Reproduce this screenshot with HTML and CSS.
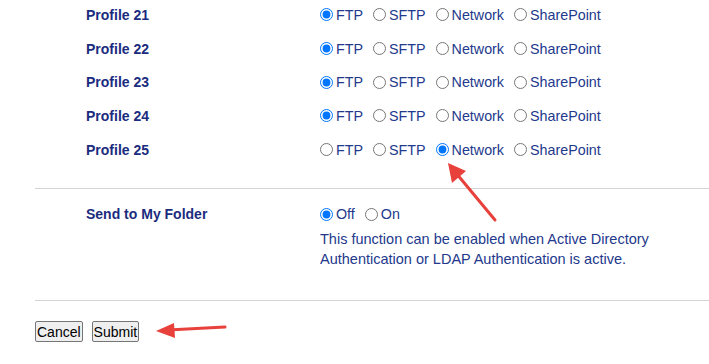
FILE: index.html
```html
<!DOCTYPE html>
<html lang="en">
<head>
    <meta charset="UTF-8">
    <title>Scan to Network Profiles</title>
    <link rel="stylesheet" href="styles.css">
</head>
<body>

    <div class="page">
        <!-- Profile protocol rows -->
        <div class="profiles">
            <div class="row">
                <div class="label">Profile 21</div>
                <div class="options">
                    <label class="opt"><input type="radio" name="p21" checked>FTP</label>
                    <label class="opt"><input type="radio" name="p21">SFTP</label>
                    <label class="opt"><input type="radio" name="p21">Network</label>
                    <label class="opt"><input type="radio" name="p21">SharePoint</label>
                </div>
            </div>
            <div class="row">
                <div class="label">Profile 22</div>
                <div class="options">
                    <label class="opt"><input type="radio" name="p22" checked>FTP</label>
                    <label class="opt"><input type="radio" name="p22">SFTP</label>
                    <label class="opt"><input type="radio" name="p22">Network</label>
                    <label class="opt"><input type="radio" name="p22">SharePoint</label>
                </div>
            </div>
            <div class="row">
                <div class="label">Profile 23</div>
                <div class="options">
                    <label class="opt"><input type="radio" name="p23" checked>FTP</label>
                    <label class="opt"><input type="radio" name="p23">SFTP</label>
                    <label class="opt"><input type="radio" name="p23">Network</label>
                    <label class="opt"><input type="radio" name="p23">SharePoint</label>
                </div>
            </div>
            <div class="row">
                <div class="label">Profile 24</div>
                <div class="options">
                    <label class="opt"><input type="radio" name="p24" checked>FTP</label>
                    <label class="opt"><input type="radio" name="p24">SFTP</label>
                    <label class="opt"><input type="radio" name="p24">Network</label>
                    <label class="opt"><input type="radio" name="p24">SharePoint</label>
                </div>
            </div>
            <div class="row">
                <div class="label">Profile 25</div>
                <div class="options">
                    <label class="opt"><input type="radio" name="p25">FTP</label>
                    <label class="opt"><input type="radio" name="p25">SFTP</label>
                    <label class="opt"><input type="radio" name="p25" checked>Network</label>
                    <label class="opt"><input type="radio" name="p25">SharePoint</label>
                </div>
            </div>
        </div>

        <hr class="divider">

        <!-- My folder setting -->
        <div class="folder">
            <div class="label">Send to My Folder</div>
            <div class="value">
                <div class="options">
                    <label class="opt"><input type="radio" name="myfolder" checked>Off</label>
                    <label class="opt"><input type="radio" name="myfolder">On</label>
                </div>
                <p class="note">This function can be enabled when Active Directory<br>Authentication or LDAP Authentication is active.</p>
            </div>
        </div>

        <hr class="divider">

        <div class="actions">
            <button>Cancel</button>
            <button>Submit</button>
        </div>
    </div>

    <!-- annotation arrows drawn over the page -->
    <svg class="marks" width="709" height="364" viewBox="0 0 709 364">
        <line x1="495" y1="220" x2="456" y2="173" stroke="#e8403a" stroke-width="3" stroke-linecap="round"/>
        <polygon points="448,163 452,183 466,171" fill="#e8403a"/>
        <line x1="225" y1="327" x2="168" y2="330" stroke="#e8403a" stroke-width="3" stroke-linecap="round"/>
        <polygon points="156,331 174,323 175,338" fill="#e8403a"/>
    </svg>

</body>
</html>
```

FILE: styles.css
```css
body {
    margin: 0;
    font-family: "Liberation Sans", Arial, sans-serif;
    font-size: 14.5px;
    color: #23398c;
    background: #ffffff;
    overflow: hidden;
}
.page {
    padding-left: 35px;
    margin-top: -2px;
}
.row {
    display: flex;
    align-items: center;
    height: 33.7px;
}
.label {
    box-sizing: border-box;
    width: 285px;
    padding-left: 51px;
    font-size: 14px;
    font-weight: bold;
    color: #1b2c7e;
}
.options {
    display: flex;
    align-items: center;
    gap: 10px;
    height: 20px;
    font-size: 14.3px;
}
.opt {
    display: flex;
    align-items: center;
}
.opt input {
    width: 13px;
    height: 13px;
    margin: 0 3px 0 0;
}
.divider {
    border: none;
    border-top: 1px solid #d4d4d4;
    margin: 22px 0 0 0;
}
.folder {
    display: flex;
    align-items: flex-start;
    padding: 15px 0 31px 0;
}
.folder .label {
    line-height: 20px;
}
.note {
    margin: 5px 0 0 0;
    line-height: 20px;
}
.folder + .divider {
    margin-top: 0;
}
.actions {
    display: flex;
    gap: 9px;
    margin-top: 20px;
}
.actions button {
    font-family: "Liberation Sans", Arial, sans-serif;
    font-size: 14px;
    color: #000;
    padding: 1px 1px;
    height: 21px;
    background: #efefef;
    border: 1px solid #767676;
    border-radius: 2px;
}
.marks {
    position: absolute;
    left: 0;
    top: 0;
    pointer-events: none;
}
```
